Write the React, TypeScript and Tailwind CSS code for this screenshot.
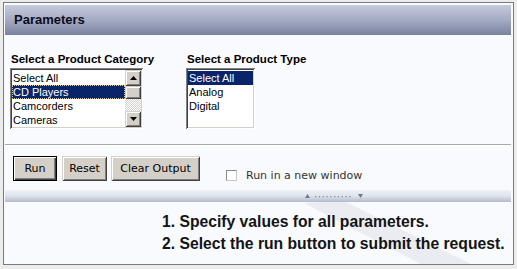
import React from "react";

const sans = { fontFamily: '"Liberation Sans", Arial, sans-serif' };
const verd = { fontFamily: '"DejaVu Sans", Verdana, sans-serif' };

function Arrow({ up }: { up?: boolean }) {
  return (
    <svg width="7" height="4" viewBox="0 0 7 4">
      {up ? <polygon points="0,4 7,4 3.5,0" fill="#000" /> : <polygon points="0,0 7,0 3.5,4" fill="#000" />}
    </svg>
  );
}

const raised =
  "bg-[#d4d0c8] shadow-[inset_1px_1px_0_#d4d0c8,inset_-1px_-1px_0_#404040,inset_2px_2px_0_#fff,inset_-2px_-2px_0_#808080]";

export default function App() {
  return (
    <div className="w-[517px] h-[269px] bg-[#ececec] pt-[2px] pl-[3px] pr-[3px] pb-[4px] box-border">
      <div className="relative h-full border border-[#7a7a7a] bg-[#f8fafd] pt-[2px] pl-[1px] pr-[2px] overflow-hidden">
        {/* watermark */}
        <svg className="absolute left-[300px] top-[190px] pointer-events-none" width="200" height="80" viewBox="0 0 200 80">
          <polygon points="0,10 40,8 175,75 130,78" fill="#e6e8ee" opacity="0.8" />
        </svg>

        <div
          className="relative h-[30px] bg-linear-to-b from-[#c6cbdc] via-[#a4abc3] to-[#7a829f] flex items-center pl-[9px] text-[13px] font-bold text-[#0b0b1c]"
          style={sans}
        >
          Parameters
        </div>

        <div className="relative flex pt-[17px] pl-[5px]" style={sans}>
          <div className="w-[176px]">
            <div className="text-[11.5px] leading-[14px] font-bold text-black pl-[1px]">Select a Product Category</div>
            <div className="mt-[2px] w-[133px] h-[61px] bg-white shadow-[inset_1px_1px_0_#808080,inset_-1px_-1px_0_#fff,inset_2px_2px_0_#404040,inset_-2px_-2px_0_#d4d0c8] p-[2px] flex">
              <div className="flex-1 pt-[1px] text-[11px] leading-[14px] text-black">
                <div className="h-[14px] pl-[1px]">Select All</div>
                <div className="h-[14px] pl-[1px] bg-[#0a246a] text-white outline-1 outline-dotted outline-[#d8c890] -outline-offset-1">CD Players</div>
                <div className="h-[14px] pl-[1px]">Camcorders</div>
                <div className="h-[14px] pl-[1px]">Cameras</div>
              </div>
              <div className="w-[16px] flex flex-col">
                <div className={`h-[16px] flex items-center justify-center ${raised}`}>
                  <Arrow up />
                </div>
                <div className={`h-[13px] ${raised}`} />
                <div className="flex-1 bg-[repeating-conic-gradient(#d4d0c8_0_25%,#ffffff_0_50%)] bg-[length:2px_2px]" />
                <div className={`h-[16px] flex items-center justify-center ${raised}`}>
                  <Arrow />
                </div>
              </div>
            </div>
          </div>
          <div>
            <div className="text-[11.5px] leading-[14px] font-bold text-black pl-[1px]">Select a Product Type</div>
            <div className="mt-[2px] w-[69px] h-[61px] bg-white shadow-[inset_1px_1px_0_#808080,inset_-1px_-1px_0_#fff,inset_2px_2px_0_#404040,inset_-2px_-2px_0_#d4d0c8] p-[2px]">
              <div className="pt-[1px] text-[11px] leading-[14px] text-black">
                <div className="h-[14px] pl-[1px] bg-[#0a246a] text-white">Select All</div>
                <div className="h-[14px] pl-[1px]">Analog</div>
                <div className="h-[14px] pl-[1px]">Digital</div>
              </div>
            </div>
          </div>
        </div>

        <div className="relative mt-[15px] h-px bg-[#a9a9a9]" />
        <div className="relative h-px bg-white" />

        <div className="relative mt-[10px] pl-[8px] flex items-end text-[11px] text-black" style={verd}>
          <button className="w-[44px] h-[25px] border border-black bg-[#d4d0c8] shadow-[inset_1px_1px_0_#fff,inset_-1px_-1px_0_#404040,inset_-2px_-2px_0_#808080] leading-none">
            Run
          </button>
          <button className={`ml-[5px] w-[45px] h-[25px] leading-none ${raised}`}>Reset</button>
          <button className={`ml-[4px] w-[89px] h-[25px] leading-none ${raised}`}>Clear Output</button>
          <div className="ml-[26px] mb-[-1px] flex items-center gap-[9px]">
            <div className="w-[11px] h-[11px] bg-white border border-[#8a8a8a] border-r-[#c8c8c8] border-b-[#c8c8c8]" />
            <span className="text-[11px] text-[#333] leading-[13px]">Run in a new window</span>
          </div>
        </div>

        <div className="relative mt-[9px] h-[12px] bg-linear-to-b from-[#eef1f6] via-[#dfe4ec] to-[#b2bbca] flex items-center">
          <div className="ml-[300px] flex items-center gap-[5px]">
            <svg width="5" height="4" viewBox="0 0 5 4">
              <polygon points="0,4 5,4 2.5,0" fill="#6c7a93" />
            </svg>
            <svg width="38" height="3" viewBox="0 0 38 3">
              {Array.from({ length: 10 }).map((_, i) => (
                <rect key={i} x={i * 3.8} y="1" width="1.3" height="1.3" fill="#8290a8" />
              ))}
            </svg>
            <svg width="5" height="4" viewBox="0 0 5 4">
              <polygon points="0,0 5,0 2.5,4" fill="#6c7a93" />
            </svg>
          </div>
        </div>

        <div className="relative mt-[9px] pl-[157px] text-[15.7px] leading-[22px] font-bold text-[#141414]" style={sans}>
          <div>1. Specify values for all parameters.</div>
          <div>2. Select the run button to submit the request.</div>
        </div>
      </div>
    </div>
  );
}
